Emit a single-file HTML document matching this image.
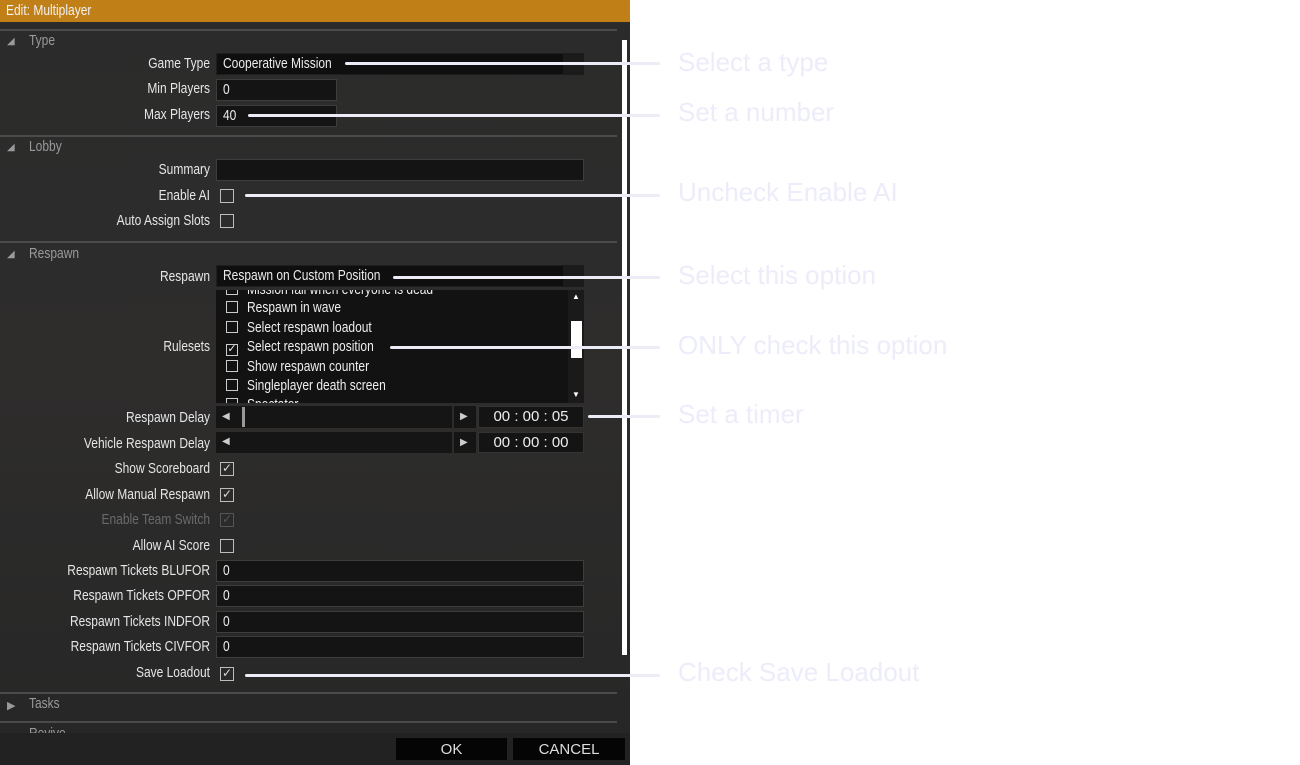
<!DOCTYPE html>
<html><head><meta charset="utf-8"><style>
*{margin:0;padding:0;box-sizing:border-box}
body{width:1300px;height:765px;background:#fff;position:relative;overflow:hidden;font-family:"Liberation Sans",sans-serif}
#panel{position:absolute;left:0;top:0;width:630px;height:765px;background:linear-gradient(180deg,#2b2b2b,#2e2d2c 50%,#262626);}
#title{position:absolute;left:0;top:0;width:630px;height:22px;background:#c07f17;color:#f2f2f2;font-size:15px;line-height:22px;padding-left:6px}
.n{display:inline-block;transform:scaleX(.8);transform-origin:left center;white-space:nowrap}
.a{position:absolute}
.lbl{position:absolute;left:0;width:210px;text-align:right;color:#e6e6e6;font-size:15px;line-height:16px;transform:scaleX(.8);transform-origin:right center;white-space:nowrap}
.sec{position:absolute;left:29px;color:#9a9a9a;font-size:15px;line-height:16px;transform:scaleX(.8);transform-origin:left center}
.tri{position:absolute;left:7px;color:#9a9a9a;font-size:10px}
.hr{position:absolute;left:0;width:617px;height:2px;background:#4b4b4b}
.fld{position:absolute;left:216px;background:#141414;border:1px solid #3d3d3d;color:#ececec;font-size:15px;line-height:20px;padding-left:6px;height:22px}
.cb{position:absolute;left:220px;width:14px;height:14px;border:1.5px solid #bdbdbd;color:#ddd;font-size:12px;line-height:11px;text-align:center}
.line{position:absolute;height:3px;background:#ececf7;border-radius:2px}
.ann{position:absolute;left:678px;color:#ececfa;font-family:"Liberation Sans",sans-serif;font-size:26px;line-height:30px}
.li{position:absolute;left:226px;color:#eee;font-size:15px;line-height:16px;white-space:nowrap}
.li span{display:inline-block;width:12px;height:12px;border:1.5px solid #ccc;margin-right:9px;vertical-align:-1px;font-size:11px;line-height:9px;text-align:center}
.btn{position:absolute;top:738px;height:22px;background:#050505;color:#ddd;font-size:15px;line-height:24px;text-align:center}
.t{position:absolute;top:0;width:106px;height:22px;background:#141414;border:1px solid #333;color:#eee;font-size:15px;line-height:20px;text-align:center}
</style></head><body>
<div id="panel">
<div id="title"><span class="n">Edit: Multiplayer</span></div>
<div class="hr" style="top:29px"></div>
<div class="tri" style="top:36px">◢</div><div class="sec" style="top:33px">Type</div>
<div class="lbl" style="top:56px">Game Type</div>
<div class="fld" style="top:53px;width:368px;border-color:#1e1e1e;background:#0f0f0f"><span class="n">Cooperative Mission</span></div>
<div class="a" style="left:563px;top:53px;width:21px;height:22px;background:#1b1b1b"></div>
<div class="lbl" style="top:81px">Min Players</div>
<div class="fld" style="top:79px;width:121px"><span class="n">0</span></div>
<div class="lbl" style="top:107px">Max Players</div>
<div class="fld" style="top:105px;width:121px"><span class="n">40</span></div>
<div class="hr" style="top:135px"></div>
<div class="tri" style="top:142px">◢</div><div class="sec" style="top:139px">Lobby</div>
<div class="lbl" style="top:162px">Summary</div>
<div class="fld" style="top:159px;width:368px"></div>
<div class="lbl" style="top:188px">Enable AI</div><div class="cb" style="top:189px"></div>
<div class="lbl" style="top:213px">Auto Assign Slots</div><div class="cb" style="top:214px"></div>
<div class="hr" style="top:241px"></div>
<div class="tri" style="top:249px">◢</div><div class="sec" style="top:246px">Respawn</div>
<div class="lbl" style="top:269px">Respawn</div>
<div class="fld" style="top:265px;width:368px;border-color:#1e1e1e;background:#0f0f0f"><span class="n">Respawn on Custom Position</span></div>
<div class="a" style="left:563px;top:265px;width:21px;height:22px;background:#1b1b1b"></div>
<div class="a" style="left:216px;top:290px;width:368px;height:113px;background:#121212;overflow:hidden">
 <div class="li" style="left:10px;top:-8px"><span></span><i class="n" style="font-style:normal">Mission fail when everyone is dead</i></div>
 <div class="li" style="left:10px;top:10px"><span></span><i class="n" style="font-style:normal">Respawn in wave</i></div>
 <div class="li" style="left:10px;top:30px"><span></span><i class="n" style="font-style:normal">Select respawn loadout</i></div>
 <div class="li" style="left:10px;top:49px"><span>✓</span><i class="n" style="font-style:normal">Select respawn position</i></div>
 <div class="li" style="left:10px;top:69px"><span></span><i class="n" style="font-style:normal">Show respawn counter</i></div>
 <div class="li" style="left:10px;top:88px"><span></span><i class="n" style="font-style:normal">Singleplayer death screen</i></div>
 <div class="li" style="left:10px;top:107px"><span></span><i class="n" style="font-style:normal">Spectator</i></div>
 <div class="a" style="left:352px;top:0;width:16px;height:113px;background:#1a1a1a"></div>
 <div class="a" style="left:356px;top:2px;color:#fff;font-size:8px">▲</div>
 <div class="a" style="left:356px;top:100px;color:#fff;font-size:8px">▼</div>
 <div class="a" style="left:355px;top:31px;width:11px;height:37px;background:#fff"></div>
</div>
<div class="lbl" style="top:339px">Rulesets</div>
<div class="lbl" style="top:410px">Respawn Delay</div>
<div class="a" style="left:216px;top:406px;width:236px;height:22px;background:#151515"></div>
<div class="a" style="left:222px;top:411px;color:#ccc;font-size:10px">◀</div>
<div class="a" style="left:242px;top:407px;width:3px;height:20px;background:#999"></div>
<div class="a" style="left:454px;top:406px;width:22px;height:22px;background:#151515;color:#ccc;font-size:10px;padding:5px 0 0 6px">▶</div>
<div class="a" style="left:478px;top:406px;width:106px;height:22px"><div class="t">00 : 00 : 05</div></div>
<div class="lbl" style="top:436px">Vehicle Respawn Delay</div>
<div class="a" style="left:216px;top:432px;width:236px;height:21px;background:#151515"></div>
<div class="a" style="left:222px;top:436px;color:#ccc;font-size:10px">◀</div>
<div class="a" style="left:454px;top:432px;width:22px;height:21px;background:#151515;color:#ccc;font-size:10px;padding:5px 0 0 6px">▶</div>
<div class="a" style="left:478px;top:432px;width:106px;height:21px"><div class="t" style="height:21px;line-height:19px">00 : 00 : 00</div></div>
<div class="lbl" style="top:461px">Show Scoreboard</div><div class="cb" style="top:462px">✓</div>
<div class="lbl" style="top:487px">Allow Manual Respawn</div><div class="cb" style="top:488px">✓</div>
<div class="lbl" style="top:512px;color:#6a6a6a">Enable Team Switch</div><div class="cb" style="top:513px;border-color:#555;color:#555">✓</div>
<div class="lbl" style="top:538px">Allow AI Score</div><div class="cb" style="top:539px"></div>
<div class="lbl" style="top:563px">Respawn Tickets BLUFOR</div><div class="fld" style="top:560px;width:368px"><span class="n">0</span></div>
<div class="lbl" style="top:588px">Respawn Tickets OPFOR</div><div class="fld" style="top:585px;width:368px"><span class="n">0</span></div>
<div class="lbl" style="top:614px">Respawn Tickets INDFOR</div><div class="fld" style="top:611px;width:368px"><span class="n">0</span></div>
<div class="lbl" style="top:639px">Respawn Tickets CIVFOR</div><div class="fld" style="top:636px;width:368px"><span class="n">0</span></div>
<div class="lbl" style="top:665px">Save Loadout</div><div class="cb" style="top:667px">✓</div>
<div class="hr" style="top:692px"></div>
<div class="tri" style="top:699px;font-size:11px">▶</div><div class="sec" style="top:696px">Tasks</div>
<div class="hr" style="top:721px"></div>
<div class="tri" style="top:730px;font-size:11px">▶</div><div class="sec" style="top:726px">Revive</div>
<div class="a" style="left:622px;top:40px;width:5px;height:615px;background:#fff"></div>
<div class="a" style="left:0;top:733px;width:630px;height:32px;background:#222"></div>
<div class="btn" style="left:396px;width:111px">OK</div>
<div class="btn" style="left:513px;width:112px">CANCEL</div>
</div>
<div class="line" style="left:345px;top:62px;width:315px"></div>
<div class="line" style="left:248px;top:114px;width:412px"></div>
<div class="line" style="left:245px;top:194px;width:415px"></div>
<div class="line" style="left:393px;top:276px;width:267px"></div>
<div class="line" style="left:390px;top:346px;width:270px"></div>
<div class="line" style="left:588px;top:415px;width:72px"></div>
<div class="line" style="left:245px;top:674px;width:415px"></div>
<div class="ann" style="top:47px">Select a type</div>
<div class="ann" style="top:97px">Set a number</div>
<div class="ann" style="top:177px">Uncheck Enable AI</div>
<div class="ann" style="top:260px">Select this option</div>
<div class="ann" style="top:330px">ONLY check this option</div>
<div class="ann" style="top:399px">Set a timer</div>
<div class="ann" style="top:657px">Check Save Loadout</div>
</body></html>
